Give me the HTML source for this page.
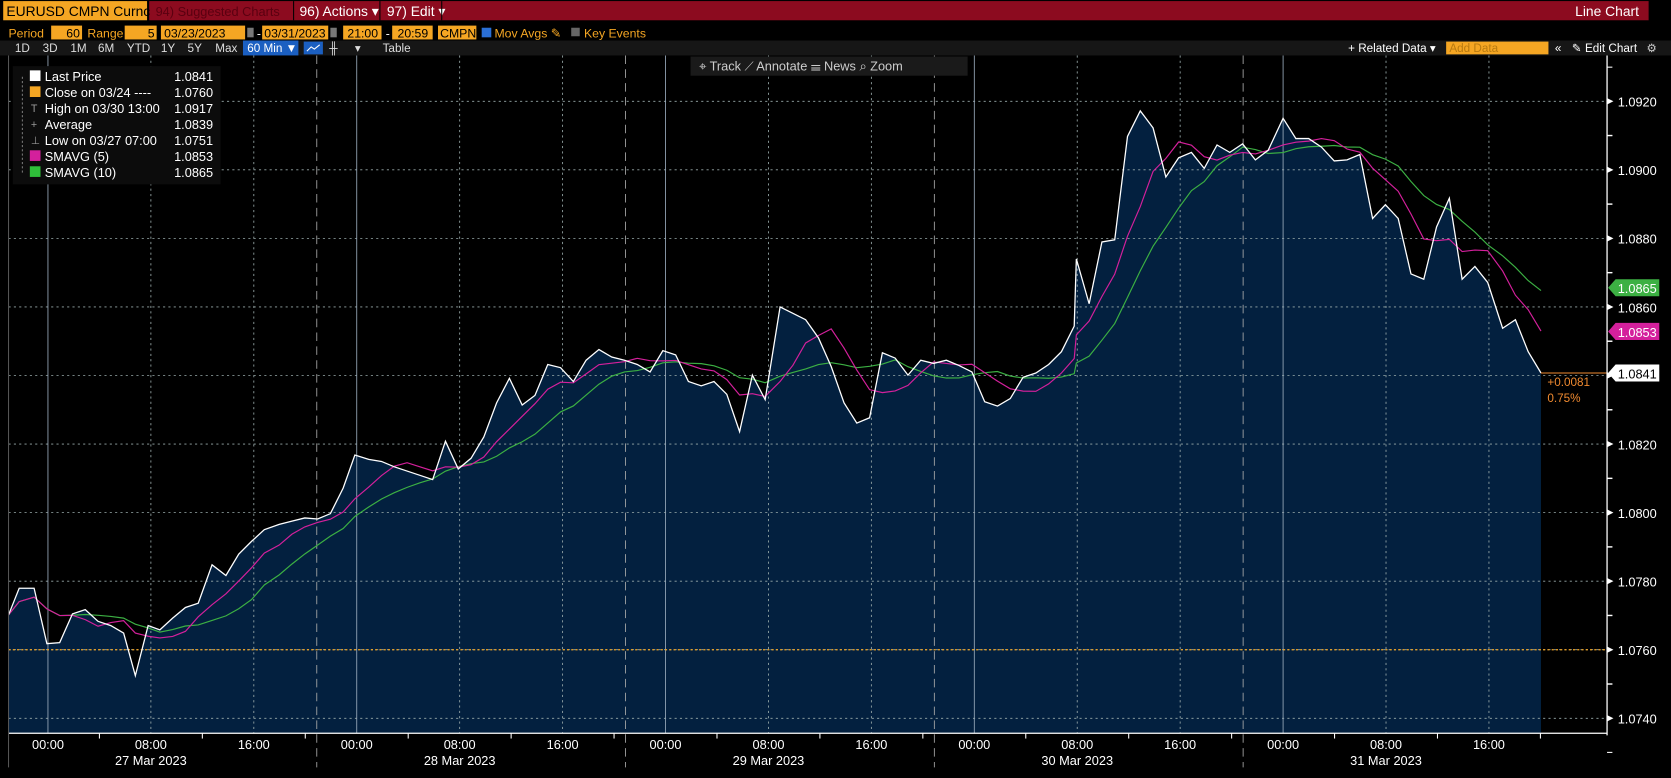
<!DOCTYPE html>
<html><head><meta charset="utf-8"><style>
html,body{margin:0;padding:0;background:#000;overflow:hidden}
svg{display:block}
text{font-family:"Liberation Sans Narrow","Liberation Sans",sans-serif}
</style></head><body>
<svg id="s" width="1671" height="778" viewBox="0 0 1568 730" xmlns="http://www.w3.org/2000/svg">
<rect width="1568" height="730" fill="#000"/>
<rect x="140" y="1" width="1407" height="18" fill="#8c0b1f"/>
<rect x="3" y="1" width="135" height="18" fill="#f5a623"/>
<text x="6" y="15" font-size="13" fill="#000">EURUSD CMPN Curnc</text>
<text x="146" y="15" font-size="12" fill="#5a0010">94) Suggested Charts</text>
<rect x="275" y="1" width="1" height="18" fill="#000"/>
<text x="281" y="15" font-size="13" fill="#fff">96) Actions ▾</text>
<rect x="356" y="1" width="1" height="18" fill="#000"/>
<text x="363" y="15" font-size="13" fill="#fff">97) Edit ▾</text>
<rect x="414" y="1" width="1" height="18" fill="#000"/>
<text x="1538" y="15" font-size="13" fill="#fff" text-anchor="end">Line Chart</text>
<g font-size="11.5">
<text x="8" y="35" fill="#f5a623">Period</text>
<rect x="48" y="24" width="29" height="13" fill="#f5a623"/><text x="75" y="35" fill="#000" text-anchor="end">60</text>
<text x="82" y="35" fill="#f5a623">Range</text>
<rect x="117" y="24" width="30" height="13" fill="#f5a623"/><text x="145" y="35" fill="#000" text-anchor="end">5</text>
<rect x="151" y="24" width="79" height="13" fill="#f5a623"/><text x="154" y="35" fill="#000">03/23/2023</text>
<rect x="232" y="26" width="6" height="9" fill="#777"/>
<text x="241" y="35" fill="#fff">-</text>
<rect x="246" y="24" width="62" height="13" fill="#f5a623"/><text x="248" y="35" fill="#000">03/31/2023</text>
<rect x="310" y="26" width="6" height="9" fill="#777"/>
<rect x="322" y="24" width="36" height="13" fill="#f5a623"/><text x="326" y="35" fill="#000">21:00</text>
<text x="362" y="35" fill="#fff">-</text>
<rect x="368" y="24" width="38" height="13" fill="#f5a623"/><text x="373" y="35" fill="#000">20:59</text>
<rect x="411" y="24" width="36" height="13" fill="#f5a623"/><text x="413" y="35" fill="#000">CMPN</text>
<rect x="452" y="26" width="9" height="9" fill="#2a6fd6"/>
<text x="464" y="35" fill="#f5a623">Mov Avgs ✎</text>
<rect x="536" y="26" width="8" height="8" fill="#666"/>
<text x="548" y="35" fill="#f5a623">Key Events</text>
</g>
<rect x="0" y="38" width="1568" height="14" fill="#161616"/>
<g font-size="11" fill="#ddd">
<text x="14" y="49">1D</text><text x="40" y="49">3D</text><text x="66" y="49">1M</text><text x="92" y="49">6M</text><text x="119" y="49">YTD</text><text x="151" y="49">1Y</text><text x="176" y="49">5Y</text><text x="202" y="49">Max</text>
<rect x="228" y="38" width="52" height="14" fill="#1b5fc1"/><text x="232" y="49" fill="#fff">60 Min ▼</text>
<rect x="285" y="39" width="18" height="12" fill="#1b5fc1"/>
<polyline points="288,48 292,44 295,46 300,42" fill="none" stroke="#fff" stroke-width="1"/>
<text x="309" y="49">╫</text><text x="333" y="49">▾</text><text x="359" y="49">Table</text>
<text x="1265" y="49" fill="#fff">+ Related Data ▾</text>
<rect x="1357" y="39" width="96" height="12" fill="#f5a623"/><text x="1360" y="49" fill="#b87a10">Add Data</text>
<text x="1459" y="49" fill="#fff">«</text>
<text x="1475" y="49" fill="#fff">✎ Edit Chart</text>
<text x="1545" y="49" fill="#ccc">⚙</text>
</g>
<g id="chart"></g>
</svg>
<script>
var g=document.getElementById('chart'),h='';
function yp(p){return 95+(1.0920-p)/0.0020*64.333;}
var P=[[8,577],[18,552],[32,552],[44,604],[56,603],[68,576],[80,572],[92,583],[104,587],[116,594],[127,634],[139,587],[150,591],[162,580],[174,570],[186,566],[199,530],[212,540],[224,520],[236,508],[248,497],[262,492],[274,489],[286,486],[298,487],[310,482],[322,458],[333,427],[346,431],[358,433],[370,438],[382,442],[394,446],[406,450],[418,414],[430,440],[442,430],[454,410],[466,378],[478,355],[490,380],[502,371],[514,342],[526,345],[538,358],[550,338],[562,328],[574,335],[586,338],[598,342],[610,349],[622,329],[634,333],[646,358],[658,362],[670,358],[682,370],[694,405],[706,352],[718,375],[732,288],[744,294],[756,300],[768,317],[780,344],[792,378],[804,397],[816,392],[828,331],[840,336],[852,352],[864,338],[876,341],[888,338],[900,343],[912,349],[924,377],[936,381],[948,374],[960,354],[972,350],[984,342],[996,330],[1008,306],[1010,243],[1022,285],[1034,227],[1046,225],[1058,128],[1070,104],[1082,120],[1094,166],[1106,148],[1118,143],[1130,158],[1142,136],[1154,143],[1166,135],[1178,150],[1190,141],[1204,111],[1216,130],[1228,130],[1240,138],[1252,151],[1264,150],[1276,145],[1288,205],[1300,192],[1312,205],[1324,257],[1336,262],[1348,213],[1360,186],[1372,262],[1384,250],[1396,265],[1410,308],[1422,300],[1434,330],[1446,350]];
var pts=P.map(function(p){return p.join(',')}).join(' ');
h+='<polygon points="8,688 '+pts+' 1446,688" fill="#03203f"/>';
for(var i=0;i<10;i++){var y=95+i*64.333;h+='<line x1="8" y1="'+y+'" x2="1508" y2="'+y+'" stroke="#9aa" stroke-width="0.8" stroke-dasharray="2,3"/>';}
var d0=45,day=289.75;
for(var d=0;d<5;d++){var x=d0+d*day;
h+='<line x1="'+x+'" y1="52" x2="'+x+'" y2="688" stroke="#9ab" stroke-width="0.8"/>';
[1,2].forEach(function(k){var xx=x+k*day/3;h+='<line x1="'+xx+'" y1="52" x2="'+xx+'" y2="688" stroke="#9aa" stroke-width="0.8" stroke-dasharray="2,3"/>';});
var sx=x+day-37.5;if(d<4)h+='<line x1="'+sx+'" y1="52" x2="'+sx+'" y2="720" stroke="#aaa" stroke-width="0.8" stroke-dasharray="8,5"/>';
}
h+='<line x1="8" y1="'+yp(1.0760)+'" x2="1508" y2="'+yp(1.0760)+'" stroke="#f5a623" stroke-width="1.2" stroke-dasharray="2,2"/>';
function ma(n){var o=[];for(var i=0;i<P.length;i++){var s=0,c=0;for(var j=Math.max(0,i-n+1);j<=i;j++){s+=P[j][1];c++;}o.push(P[i][0]+','+(s/c).toFixed(1));}return o.join(' ');}
h+='<polyline points="'+ma(10)+'" fill="none" stroke="#3cb043" stroke-width="1.1"/>';
h+='<polyline points="'+ma(5)+'" fill="none" stroke="#d4209c" stroke-width="1.1"/>';
h+='<polyline points="'+pts+'" fill="none" stroke="#fff" stroke-width="1.2"/>';
h+='<line x1="1446" y1="350" x2="1508" y2="350" stroke="#f08a30" stroke-width="1"/>';
h+='<text x="1452" y="362" font-size="11" fill="#f08a30">+0.0081</text><text x="1452" y="377" font-size="11" fill="#f08a30">0.75%</text>';
h+='<line x1="1508" y1="52" x2="1508" y2="690" stroke="#fff" stroke-width="1.2"/>';
h+='<line x1="8" y1="688" x2="1508" y2="688" stroke="#fff" stroke-width="1.2"/>';
h+='<line x1="8" y1="52" x2="8" y2="720" stroke="#555" stroke-width="1"/>';
var labs=['1.0920','1.0900','1.0880','1.0860','1.0840','1.0820','1.0800','1.0780','1.0760','1.0740'];
for(var i=0;i<10;i++){var y=95+i*64.333;
h+='<polygon points="1508,'+(y-3)+' 1514,'+y+' 1508,'+(y+3)+'" fill="#fff"/>';
h+='<line x1="1508" y1="'+(y+32)+'" x2="1513" y2="'+(y+32)+'" stroke="#fff"/>';
h+='<line x1="1508" y1="'+(y-32)+'" x2="1513" y2="'+(y-32)+'" stroke="#fff"/>';
if(i!=4)h+='<text x="1518" y="'+(y+5)+'" font-size="12" fill="#fff">'+labs[i]+'</text>';}
function tag(y,bg,fg,t){h+='<polygon points="1509,'+y+' 1516,'+(y-8)+' 1557,'+(y-8)+' 1557,'+(y+8)+' 1516,'+(y+8)+'" fill="'+bg+'"/><text x="1518" y="'+(y+5)+'" font-size="12" fill="'+fg+'">'+t+'</text>';}
tag(270,'#3cb043','#fff','1.0865');tag(311,'#d4209c','#fff','1.0853');tag(350,'#fff','#000','1.0841');
var dates=['27 Mar 2023','28 Mar 2023','29 Mar 2023','30 Mar 2023','31 Mar 2023'];
for(var d=0;d<5;d++){var x=d0+d*day;['00:00','08:00','16:00'].forEach(function(t,k){var xx=x+k*day/3;
if(xx<1500)h+='<text x="'+xx+'" y="703" font-size="12" fill="#fff" text-anchor="middle">'+t+'</text>';
h+='<line x1="'+(xx+day/6)+'" y1="688" x2="'+(xx+day/6)+'" y2="693" stroke="#fff"/>';});
h+='<text x="'+(x+day/3)+'" y="718" font-size="12" fill="#fff" text-anchor="middle">'+dates[d]+'</text>';}
h+='<rect x="648" y="53" width="260" height="18" fill="#1a1a1a"/>';
h+='<text x="656" y="66" font-size="12" fill="#ccc">⌖ Track   ⟋ Annotate   ☰ News   ⌕ Zoom</text>';
h+='<rect x="12" y="62" width="195" height="111" fill="#0c0c0c"/>';
var L=[['#fff','Last Price','1.0841'],['#f5a623','Close on 03/24 ----','1.0760'],[null,'High on 03/30 13:00','1.0917'],[null,'Average','1.0839'],[null,'Low on 03/27 07:00','1.0751'],['#d4209c','SMAVG (5)','1.0853'],['#2fbf3a','SMAVG (10)','1.0865']];
h+='<line x1="21" y1="72" x2="21" y2="162" stroke="#777" stroke-dasharray="2,2"/>';
L.forEach(function(r,i){var y=71+i*15;
if(r[0])h+='<rect x="28" y="'+(y-5)+'" width="10" height="10" fill="'+r[0]+'"/>';else h+='<text x="29" y="'+(y+4)+'" font-size="10" fill="#999">'+(i==3?'+':(i==2?'T':'⊥'))+'</text>';
h+='<text x="42" y="'+(y+5)+'" font-size="12" fill="#fff">'+r[1]+'</text><text x="200" y="'+(y+5)+'" font-size="12" fill="#fff" text-anchor="end">'+r[2]+'</text>';});
g.innerHTML=h;
</script>
</body></html>
